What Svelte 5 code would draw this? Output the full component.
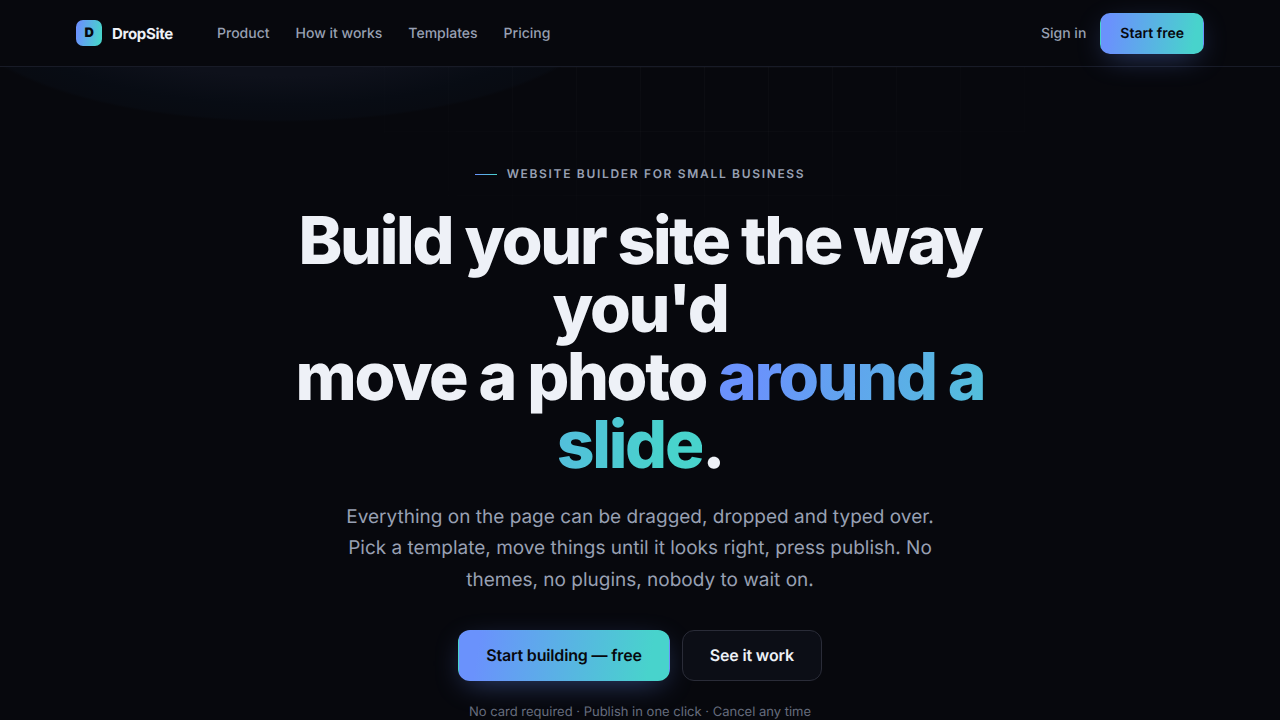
<script lang="ts">
	interface NavLink {
		label: string;
		href: string;
	}

	const links: NavLink[] = [
		{ label: 'Product', href: '#product' },
		{ label: 'How it works', href: '#how' },
		{ label: 'Templates', href: '#templates' },
		{ label: 'Pricing', href: '#pricing' }
	];
</script>

<header class="site-header">
	<div class="header-inner">
		<a class="brand" href="#top">
			<span class="brand-mark">D</span>
			<span class="brand-name">DropSite</span>
		</a>
		<nav class="nav" aria-label="Main">
			{#each links as link (link.href)}
				<a href={link.href}>{link.label}</a>
			{/each}
		</nav>
		<div class="account">
			<a class="sign-in" href="#signin">Sign in</a>
			<a class="btn btn-primary btn-small" href="#start">Start free</a>
		</div>
	</div>
</header>

<main class="hero" id="top">
	<div class="hero-inner">
		<p class="eyebrow">Website builder for small business</p>
		<h1>
			Build your site the way you'd<br />move a photo <span class="accent">around a slide</span>.
		</h1>
		<p class="lead">
			Everything on the page can be dragged, dropped and typed over. Pick a template, move things
			until it looks right, press publish. No themes, no plugins, nobody to wait on.
		</p>
		<div class="actions">
			<a class="btn btn-primary" href="#start">Start building — free</a>
			<a class="btn btn-ghost" href="#how">See it work</a>
		</div>
		<p class="note">No card required · Publish in one click · Cancel any time</p>
	</div>
</main>

<style>
	:global(html) {
		scrollbar-width: none;
	}
	:global(body) {
		background: #07080d;
		color: #eef1f7;
		font-family: Inter, 'Liberation Sans', sans-serif;
		font-size: 16px;
		line-height: 1.6;
		text-rendering: geometricPrecision;
		-webkit-font-smoothing: antialiased;
		overflow-x: hidden;
	}
	a {
		color: inherit;
		text-decoration: none;
	}
	.site-header {
		position: sticky;
		top: 0;
		z-index: 10;
		background: #07080d;
		border-bottom: 1px solid #181b27;
	}
	.header-inner {
		display: flex;
		align-items: center;
		box-sizing: border-box;
		max-width: 1176px;
		height: 66px;
		margin: 0 auto;
		padding: 0 24px;
	}
	.brand {
		display: flex;
		align-items: center;
		gap: 10px;
		font-size: 15px;
		font-weight: 700;
		letter-spacing: -0.02em;
	}
	.brand-mark {
		display: grid;
		place-items: center;
		width: 26px;
		height: 26px;
		border-radius: 7px;
		background: linear-gradient(100deg, #6a92fc 10%, #48d3cc 90%);
		color: #07080d;
		font-size: 13px;
		font-weight: 900;
		line-height: 22px;
	}
	.brand-name,
	.nav,
	.sign-in {
		padding-top: 2px;
		line-height: 24px;
	}
	.nav {
		display: flex;
		gap: 26px;
		margin-left: 44px;
		color: #98a0b3;
		font-size: 14px;
		font-weight: 500;
	}
	.account {
		display: flex;
		align-items: center;
		gap: 14px;
		margin-left: auto;
	}
	.sign-in {
		color: #98a0b3;
		font-size: 14px;
		font-weight: 500;
	}
	.btn {
		padding: 12px 27px;
		border: 1px solid transparent;
		border-radius: 12px;
		font-size: 16px;
		font-weight: 600;
		letter-spacing: -0.01em;
		line-height: 25px;
	}
	.btn-primary {
		background-image: linear-gradient(100deg, #6a92fc 10%, #48d3cc 90%);
		box-shadow: 0 8px 30px -8px rgba(106, 146, 255, 0.45);
		color: #07080d;
	}
	.btn-small {
		padding: 8px 19px 7px;
		border-radius: 10px;
		font-size: 14px;
		letter-spacing: normal;
		line-height: 24px;
	}
	.btn-ghost {
		border-color: #2a2c38;
		background: #0c0e16;
	}
	.hero {
		position: relative;
		overflow: hidden;
		padding: 96px 24px;
		background: radial-gradient(
			ellipse 328px 115px at 22% -60px,
			#0e111b 60%,
			#080c14 85%,
			#080b12 98%,
			transparent 100%
		);
	}
	.hero::before {
		content: '';
		position: absolute;
		inset: 0;
		background-image:
			linear-gradient(rgba(255, 255, 255, 0.025) 1px, transparent 1px),
			linear-gradient(90deg, rgba(255, 255, 255, 0.025) 1px, transparent 1px);
		background-size: 64px 64px;
		mask-image: radial-gradient(ellipse 440px 240px at 55% 0, #000 10%, transparent 100%);
	}
	.hero-inner {
		position: relative;
		max-width: 720px;
		margin: 0 auto;
		text-align: center;
	}
	.eyebrow {
		display: flex;
		align-items: center;
		justify-content: center;
		gap: 10px;
		margin: 0 0 21px;
		color: #98a0b3;
		font-size: 12px;
		font-weight: 600;
		letter-spacing: 0.14em;
		line-height: 22px;
		text-transform: uppercase;
	}
	.eyebrow::before {
		content: '';
		width: 22px;
		height: 1px;
		background: linear-gradient(100deg, #6a92fc, #48d3cc);
	}
	h1 {
		margin: 0;
		font-size: 66px;
		font-weight: 800;
		letter-spacing: -0.035em;
		line-height: 68px;
	}
	.accent {
		background: linear-gradient(100deg, #6a92fc 10%, #48d3cc 90%);
		background-clip: text;
		-webkit-background-clip: text;
		color: transparent;
	}
	.lead {
		max-width: 600px;
		margin: 23px auto 35px;
		color: #98a0b3;
		font-size: 19px;
		line-height: 1.65;
	}
	.actions {
		display: flex;
		flex-wrap: wrap;
		justify-content: center;
		gap: 12px;
	}
	.note {
		margin: 21px 0 0;
		color: #666d7e;
		font-size: 13px;
		line-height: 21px;
	}
</style>
